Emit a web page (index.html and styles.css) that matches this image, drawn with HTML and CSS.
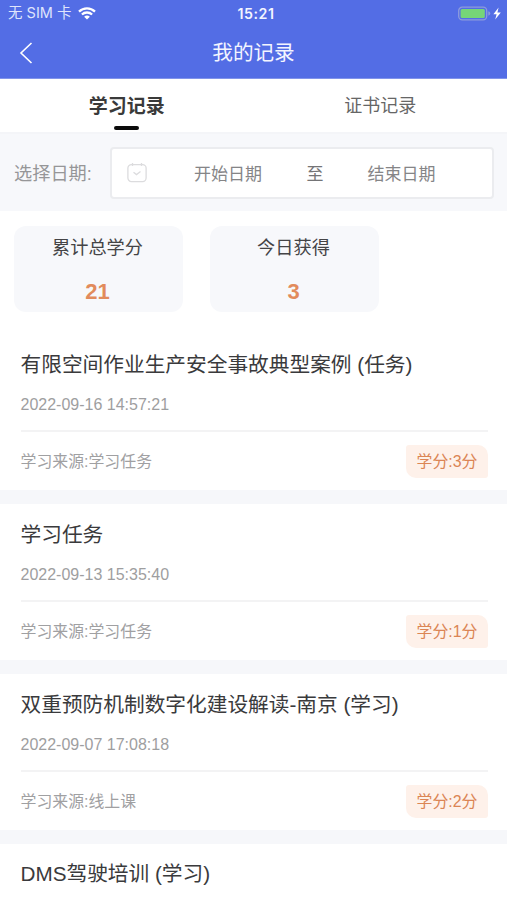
FILE: index.html
```html
<!DOCTYPE html>
<html lang="zh-CN">
<head>
<meta charset="utf-8">
<meta name="viewport" content="width=device-width, initial-scale=1">
<title>我的记录</title>
<link rel="stylesheet" href="styles.css">
</head>
<body>
<header class="header">
  <div class="status">
    <div class="carrier"><span>无 SIM 卡</span>
      <svg class="wifi" width="18" height="13" viewBox="0 0 18 13" fill="none" stroke="#fff" stroke-width="2.3"><path d="M1 4.6a11.6 11.6 0 0 1 16 0M3.9 7.5a7.5 7.5 0 0 1 10.2 0"/><path d="M9 12.6L6.1 9.8a4.2 4.2 0 0 1 5.8 0z" fill="#fff" stroke="none"/></svg>
    </div>
    <div class="clock">15:21</div>
    <div class="power">
      <svg width="44" height="16" viewBox="0 0 44 16"><rect x=".7" y="1.2" width="28" height="12.6" rx="3.5" fill="none" stroke="#8d9bdc" stroke-width="1.3"/><rect x="2.6" y="3.1" width="24.2" height="8.8" rx="1.5" fill="#76d578"/><path d="M30.3 5.3q2 .6 2 2.2t-2 2.2z" fill="#8d9bdc"/><path d="M40.6 1.4L35.4 8.2h3.2l-1.4 5.4 5.6-7.2h-3.4z" fill="#fff"/></svg>
    </div>
  </div>
  <div class="navbar">
    <svg class="back" width="14" height="22" viewBox="0 0 14 22" fill="none" stroke="#fff" stroke-width="1.6"><path d="M12.5 1L2 11l10.5 10"/></svg>
    <h1>我的记录</h1>
  </div>
</header>
<nav class="tabs">
  <div class="tab active">学习记录</div>
  <div class="tab">证书记录</div>
</nav>
<section class="filter">
  <span class="filter-label">选择日期:</span>
  <div class="range">
    <svg class="calendar" width="20" height="20" viewBox="0 0 20 20" fill="none" stroke="#dcdcde" stroke-width="1.3"><rect x=".9" y="1.6" width="18.2" height="17" rx="3.5"/><path d="M5.5 0v3M14.5 0v3M6.5 9.2l3 2.4 4-3"/></svg>
    <span class="date">开始日期</span>
    <span class="to">至</span>
    <span class="date">结束日期</span>
  </div>
</section>
<section class="stats">
  <div class="stat"><span>累计总学分</span><strong>21</strong></div>
  <div class="stat"><span>今日获得</span><strong>3</strong></div>
</section>
<main class="records">
  <article class="record">
    <h2>有限空间作业生产安全事故典型案例 (任务)</h2>
    <time>2022-09-16 14:57:21</time>
    <div class="meta"><span>学习来源:学习任务</span><span class="score">学分:3分</span></div>
  </article>
  <article class="record">
    <h2>学习任务</h2>
    <time>2022-09-13 15:35:40</time>
    <div class="meta"><span>学习来源:学习任务</span><span class="score">学分:1分</span></div>
  </article>
  <article class="record">
    <h2>双重预防机制数字化建设解读-南京 (学习)</h2>
    <time>2022-09-07 17:08:18</time>
    <div class="meta"><span>学习来源:线上课</span><span class="score">学分:2分</span></div>
  </article>
  <article class="record">
    <h2>DMS驾驶培训 (学习)</h2>
  </article>
</main>
</body>
</html>
```
FILE: styles.css
```css
* { box-sizing: border-box; }
body {
  margin: 0;
  display: flex;
  flex-direction: column;
  background: #fff;
  color: #3a3a3c;
  font-family: "Liberation Sans", "Noto Sans CJK SC", sans-serif;
}
h1, h2 { margin: 0; font-weight: 400; }
svg { display: block; flex: none; }

.header { flex: none; height: 79px; background: #536de5; border-bottom: 1px solid #8194ea; color: #f3f5ff; }
.status { height: 27px; display: grid; grid-template-columns: 1fr auto 1fr; align-items: center; padding: 0 5px 0 8px; }
.carrier { display: flex; align-items: center; gap: 7px; font-size: 14.5px; line-height: 20px; white-space: nowrap; font-family: Inter, "Noto Sans CJK SC", sans-serif; color: #dfe4fc; }
.carrier span { padding-bottom: 1px; }
.wifi { margin-bottom: 1px; }
.clock { font-family: Inter, sans-serif; font-size: 14.2px; font-weight: 600; letter-spacing: .5px; padding-left: 2px; }
.power { display: flex; justify-content: flex-end; }
.navbar { height: 51px; display: grid; grid-template-columns: 60px 1fr 60px; align-items: center; text-align: center; }
.back { margin-left: 19px; }
.navbar h1 { font-size: 20.6px; line-height: 30px; }

.tabs { flex: none; height: 55px; display: grid; grid-template-columns: 1fr 1fr; border-bottom: 2px solid #f4f5f8; }
.tab { display: flex; flex-direction: column; align-items: center; padding-top: 14px; font-size: 18px; line-height: 27px; color: #666; }
.tab.active { font-size: 19px; font-weight: 700; color: #3a3a3a; }
.tab.active::after { content: ""; width: 25px; height: 4px; margin-top: 6px; border-radius: 2px; background: #0b0b0b; }

.filter { flex: none; height: 77px; display: flex; align-items: center; padding: 0 13px 0 14px; background: #f7f8fb; }
.filter-label { width: 96px; font-size: 18.2px; color: #969698; white-space: nowrap; padding-bottom: 1px; }
.range { flex: 1; height: 52px; display: flex; align-items: center; border: 2px solid #ebecef; border-radius: 4px; background: #fff; font-size: 17px; color: #858587; padding-left: 15px; }
.date { width: 144px; text-align: center; }
.to { width: 30px; text-align: center; color: #747476; }
.calendar { margin-top: 1px; }
.calendar + .date { margin-left: 9px; }
.date:last-child { width: 143px; }

.stats { flex: none; height: 123px; padding: 15px 14px 0; display: flex; gap: 27px; }
.stat { width: 169px; height: 86px; border-radius: 12px; background: #f7f8fb; display: flex; flex-direction: column; align-items: center; padding: 9px 2px 0 0; }
.stat span { font-size: 18.2px; line-height: 27px; color: #444446; }
.stat strong { font-size: 22px; line-height: 26px; margin-top: 17px; color: #e28b5c; }

.records { display: flex; flex-direction: column; }
.record { flex: none; height: 170px; padding: 15px 19px 0 20.5px; border-bottom: 14px solid #f6f7fa; }
.record h2 { font-size: 20.7px; line-height: 32px; white-space: nowrap; }
.record time { display: block; margin-top: 13px; font-size: 16px; line-height: 22px; color: #9e9ea0; }
.meta { display: flex; align-items: flex-start; justify-content: space-between; margin-top: 14px; padding-top: 13px; border-top: 2px solid #f3f3f4; font-size: 15.9px; line-height: 33px; color: #a0a0a2; }
.score { width: 82px; height: 33px; text-align: center; color: #db8555; background: #fef1ea; border-radius: 3px 10px 3px 10px; }
.record:last-child { height: 56px; border-bottom: 0; }
.record:last-child h2 { margin-top: -1px; }
```
